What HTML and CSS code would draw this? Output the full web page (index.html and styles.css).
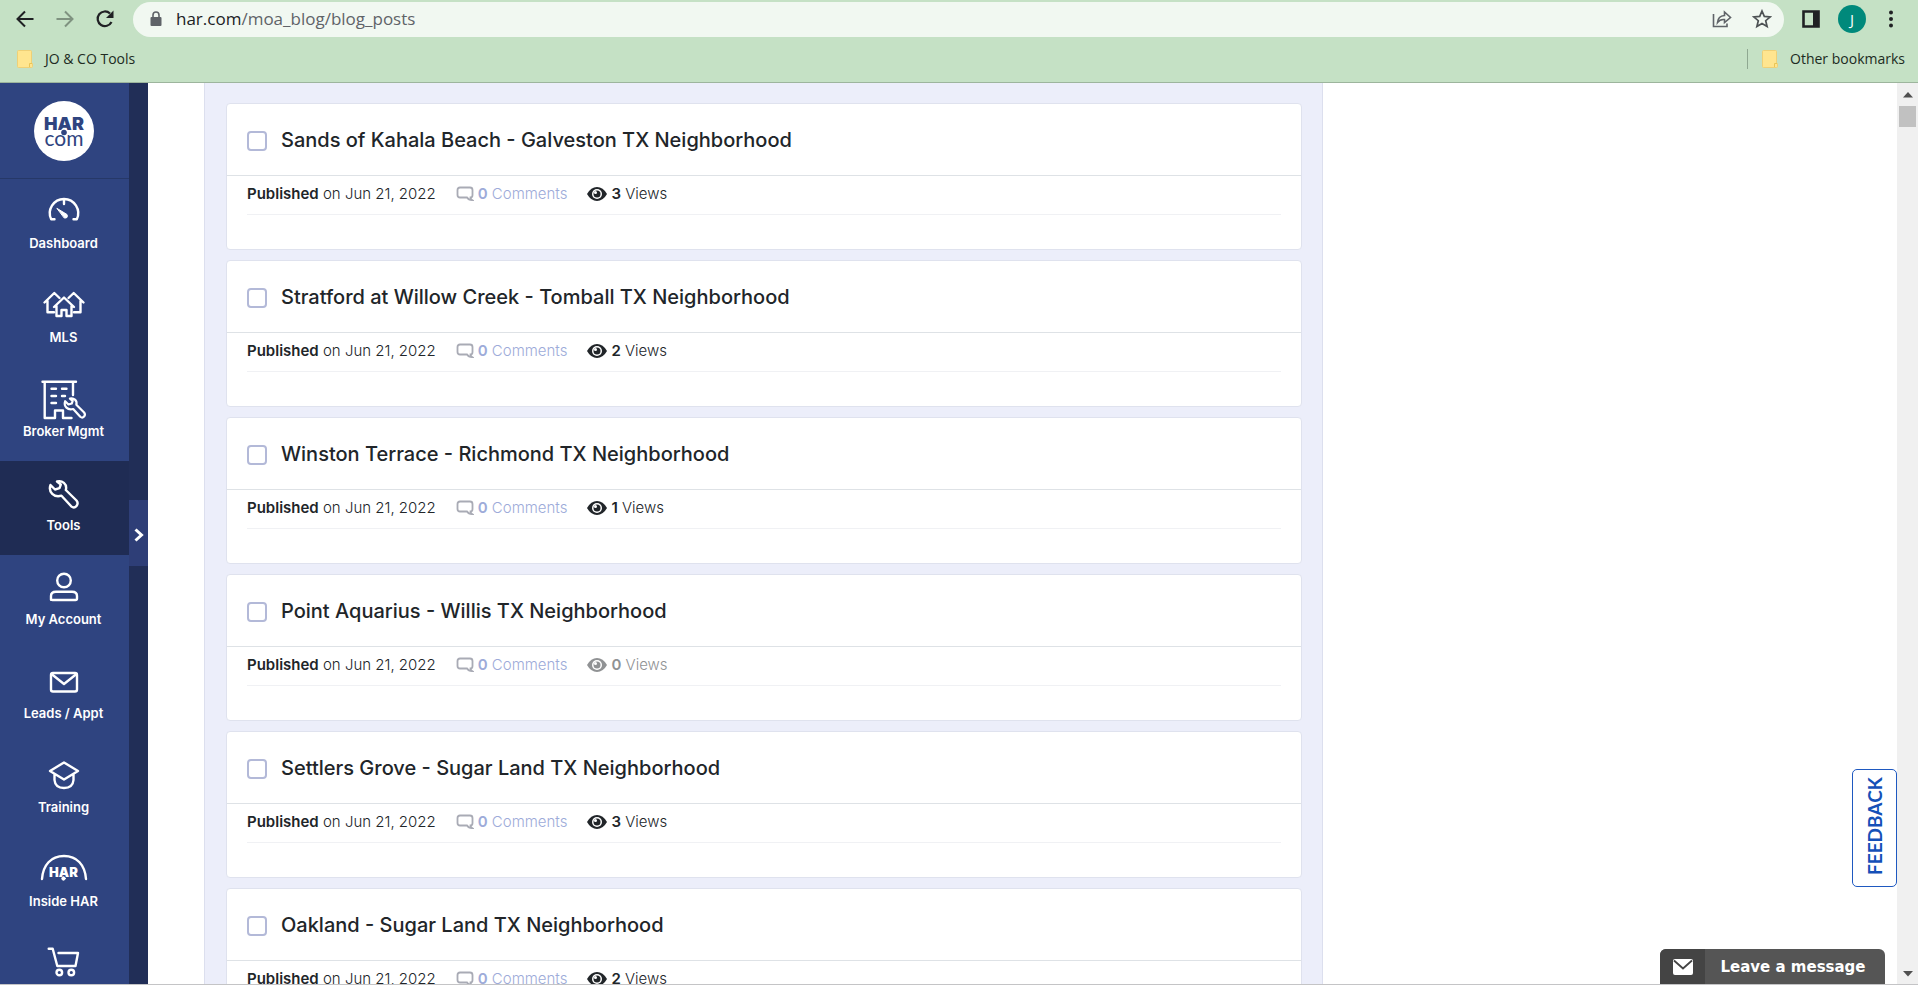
FILE: index.html
```
<!DOCTYPE html>
<html lang="en">
<head>
<meta charset="utf-8">
<meta name="viewport" content="width=device-width, initial-scale=1">
<title>Blog Posts</title>
<link rel="stylesheet" href="styles.css">
</head>
<body>
<svg class="defs" aria-hidden="true">
  <symbol id="wrench" viewBox="0 0 48 48"><path d="M17 12.500C22 11 27.500 15 25.800 21L36.500 31.500C39.500 35.500 35 40.500 31.200 37.300L21.500 26.700C14 29 8 23 10.500 16L15 20.500L19.500 19.200L20.800 15.500Z"/></symbol>
  <symbol id="comment" viewBox="0 0 18 16"><path d="M4 1.500H14Q16.500 1.500 16.500 4V9Q16.500 11.500 14.500 11.500Q14.500 13 16 14Q12.500 14 11 11.500H4Q1.500 11.500 1.500 9V4Q1.500 1.500 4 1.500Z" fill="none" stroke="currentColor" stroke-width="1.800"/></symbol>
  <symbol id="eye" viewBox="0 0 20 16"><path d="M0 8Q4 1 10 1T20 8Q16 15 10 15T0 8Z" fill="currentColor"/><circle cx="10" cy="8" r="5" fill="#fff"/><circle cx="10" cy="8" r="3.500" fill="currentColor"/><circle cx="8.500" cy="6.500" r="1.500" fill="#fff"/></symbol>
  <symbol id="folder" viewBox="0 0 16 18"><path d="M1.500.5H13.500Q14.500.5 14.500 1.500V13.500H15.500V16.500Q15.500 17.500 14.500 17.500H1.500Q.5 17.500.5 16.500V1.500Q.5.500 1.500.5Z" fill="#ffe58f" stroke="#efd076"/><path d="M12.500 17V13.500H15" fill="none" stroke="#e9c556"/></symbol>
</svg>

<header class="browser">
  <div class="toolbar">
    <button class="tool" aria-label="Back"><svg width="20" height="20" viewBox="0 0 20 20"><path d="M18.500 10H3M10 2.500L2.500 10L10 17.500" fill="none" stroke="#202124" stroke-width="2"/></svg></button>
    <button class="tool tool-dim" aria-label="Forward"><svg width="20" height="20" viewBox="0 0 20 20"><path d="M1.500 10H17M10 2.500L17.500 10L10 17.500" fill="none" stroke="#7f9280" stroke-width="2"/></svg></button>
    <button class="tool reload" aria-label="Reload"><svg width="20" height="20" viewBox="0 0 20 20"><path d="M16.500 13A7.300 7.300 0 1 1 15 4.500" fill="none" stroke="#202124" stroke-width="2.200"/><path d="M18.500 1.500V9H11Z" fill="#202124"/></svg></button>
    <div class="omnibox">
      <svg width="12" height="16" viewBox="0 0 12 16"><rect x=".5" y="6" width="11" height="9" rx="1" fill="#5f6368"/><path d="M3 7V4a3 3 0 0 1 6 0V7" fill="none" stroke="#5f6368" stroke-width="1.600"/></svg>
      <a class="url" href="#"><span class="host">har.com</span>/moa_blog/blog_posts</a>
      <button class="tool" aria-label="Share"><svg width="20" height="18" viewBox="0 0 20 18"><path d="M1.500 4V16.500H15V13.500M5.500 12.500Q6 6 12.500 5.500V2L18.500 7.500L12.500 12.500V9.500Q8 9 5.500 12.500Z" fill="none" stroke="#5f6368" stroke-width="1.600"/></svg></button>
      <button class="tool" aria-label="Bookmark this page"><svg width="20" height="20" viewBox="0 0 20 20"><path d="M10 2L12.300 7.400L18.200 7.900L13.700 11.700L15.100 17.500L10 14.400L4.900 17.500L6.300 11.700L1.800 7.900L7.700 7.400Z" fill="none" stroke="#4d5254" stroke-width="1.700"/></svg></button>
    </div>
    <button class="tool" aria-label="Side panel"><svg width="18" height="18" viewBox="0 0 18 18"><path d="M1.500 1.500H16.500V16.500H1.500Z" fill="none" stroke="#202124" stroke-width="2.600"/><rect x="11" y="1" width="6" height="16" fill="#202124"/></svg></button>
    <button class="avatar">J</button>
    <button class="tool" aria-label="Menu"><svg width="6" height="18" viewBox="0 0 6 18"><g fill="#202124"><circle cx="3" cy="2.500" r="2"/><circle cx="3" cy="9" r="2"/><circle cx="3" cy="15.500" r="2"/></g></svg></button>
  </div>
  <nav class="bookmarks" aria-label="Bookmarks">
    <a href="#"><svg width="16" height="18"><use href="#folder"/></svg>JO &amp; CO Tools</a>
    <a class="other" href="#"><svg width="16" height="18"><use href="#folder"/></svg>Other bookmarks</a>
  </nav>
</header>

<div class="page">
  <nav class="sidebar" aria-label="Main">
    <a class="logo" href="#"><svg width="60" height="60" viewBox="0 0 60 60"><circle cx="30" cy="30" r="30" fill="#fff"/><text class="logo-har" x="30" y="29" text-anchor="middle">HAR</text><circle cx="30" cy="31.500" r="3.800" fill="#fff"/><circle cx="30" cy="31.500" r="2.800" fill="#2f4480"/><text class="logo-com" x="30" y="45" text-anchor="middle">com</text></svg></a>
    <a class="item" href="#"><svg class="icon" viewBox="0 0 48 48"><path d="M14.500 32.300H11.200A14.200 14.200 0 1 1 36.800 32.300H33.500M24 12.500V17"/><path class="solid" d="M17.200 21.500L27 27.500Q28.500 31.500 24.500 31Z"/></svg>Dashboard</a>
    <a class="item" href="#"><svg class="icon" viewBox="0 0 48 48"><path d="M14 26L24 16.500L34 26M16.500 24.500V35H21.500V29H26.500V35H31.500V24.500M4.500 21.500L14.300 12L19.500 17M7.500 19.500V31.200H14M43.500 21.500L33.700 12L28.500 17M40.500 19.500V31.200H34"/></svg>MLS</a>
    <a class="item" href="#"><svg class="icon" viewBox="0 0 48 48"><path d="M2.500 6.700H36M4.700 6.700V43H15V35.500H23V43H31.500M33 6.700V20M11.500 13.700H16M22 13.700H26.500M11.500 21H16M22 21H25M11.500 28H16"/><g class="mini" transform="translate(17.500 14.500) scale(.73)"><path d="M17 12.500C22 11 27.500 15 25.800 21L36.500 31.500C39.500 35.500 35 40.500 31.200 37.300L21.500 26.700C14 29 8 23 10.500 16L15 20.500L19.500 19.200L20.800 15.500Z"/></g></svg>Broker Mgmt</a>
    <a class="item active" href="#"><svg class="icon"><use href="#wrench"/></svg>Tools</a>
    <a class="item" href="#"><svg class="icon" viewBox="0 0 48 48"><circle cx="24" cy="17.500" r="6.800"/><path d="M11 36.700V33Q11 28.700 16 28.700H32Q37 28.700 37 33V35.500Q37 37 35.500 37H12.500Q11 37 11 35.500"/></svg>My Account</a>
    <a class="item" href="#"><svg class="icon" viewBox="0 0 48 48"><rect x="11" y="16" width="26" height="18.500" rx="2"/><path d="M11.500 17L24 27L36.500 17"/></svg>Leads / Appt</a>
    <a class="item" href="#"><svg class="icon" viewBox="0 0 48 48"><path d="M10 20L24 11.500L38 20L24 28.500ZM14.500 23.500V29C15 35 19 37 24 37S33 35 33.500 29V23.500"/></svg>Training</a>
    <a class="item" href="#"><svg class="icon" viewBox="0 0 48 48"><path d="M2 34C3 20 11 11 24 11S45 20 46 34"/><text class="icon-har" x="23.500" y="32" text-anchor="middle">HAR</text><circle class="dot" cx="23.500" cy="33.500" r="1.700"/></svg>Inside HAR</a>
    <a class="item" href="#" aria-label="Store"><svg class="icon" viewBox="0 0 48 48"><path d="M8.700 9.800H12.700L17.300 27H35.500L38 14H18.500"/><circle cx="19.300" cy="33.500" r="2.800"/><circle cx="31.300" cy="33.500" r="2.800"/></svg></a>
  </nav>
  <div class="rail"><button class="expand" aria-label="Expand menu"><svg width="12" height="16" viewBox="0 0 12 16"><path d="M2.500 2.500L8.500 8L2.500 13.500" fill="none" stroke="#fff" stroke-width="3"/></svg></button></div>

  <main class="content">
    <section class="panel">
      <article class="card">
        <header><input type="checkbox" id="p1"><label for="p1">Sands of Kahala Beach - Galveston TX Neighborhood</label></header>
        <div class="meta"><span><b>Published</b> on Jun 21, 2022</span><a href="#"><svg width="18" height="16"><use href="#comment"/></svg><span><b>0</b> Comments</span></a><span class="views"><svg width="20" height="16"><use href="#eye"/></svg><span><b>3</b> Views</span></span></div>
      </article>
      <article class="card">
        <header><input type="checkbox" id="p2"><label for="p2">Stratford at Willow Creek - Tomball TX Neighborhood</label></header>
        <div class="meta"><span><b>Published</b> on Jun 21, 2022</span><a href="#"><svg width="18" height="16"><use href="#comment"/></svg><span><b>0</b> Comments</span></a><span class="views"><svg width="20" height="16"><use href="#eye"/></svg><span><b>2</b> Views</span></span></div>
      </article>
      <article class="card">
        <header><input type="checkbox" id="p3"><label for="p3">Winston Terrace - Richmond TX Neighborhood</label></header>
        <div class="meta"><span><b>Published</b> on Jun 21, 2022</span><a href="#"><svg width="18" height="16"><use href="#comment"/></svg><span><b>0</b> Comments</span></a><span class="views"><svg width="20" height="16"><use href="#eye"/></svg><span><b>1</b> Views</span></span></div>
      </article>
      <article class="card">
        <header><input type="checkbox" id="p4"><label for="p4">Point Aquarius - Willis TX Neighborhood</label></header>
        <div class="meta"><span><b>Published</b> on Jun 21, 2022</span><a href="#"><svg width="18" height="16"><use href="#comment"/></svg><span><b>0</b> Comments</span></a><span class="views none"><svg width="20" height="16"><use href="#eye"/></svg><span><b>0</b> Views</span></span></div>
      </article>
      <article class="card">
        <header><input type="checkbox" id="p5"><label for="p5">Settlers Grove - Sugar Land TX Neighborhood</label></header>
        <div class="meta"><span><b>Published</b> on Jun 21, 2022</span><a href="#"><svg width="18" height="16"><use href="#comment"/></svg><span><b>0</b> Comments</span></a><span class="views"><svg width="20" height="16"><use href="#eye"/></svg><span><b>3</b> Views</span></span></div>
      </article>
      <article class="card">
        <header><input type="checkbox" id="p6"><label for="p6">Oakland - Sugar Land TX Neighborhood</label></header>
        <div class="meta"><span><b>Published</b> on Jun 21, 2022</span><a href="#"><svg width="18" height="16"><use href="#comment"/></svg><span><b>0</b> Comments</span></a><span class="views"><svg width="20" height="16"><use href="#eye"/></svg><span><b>2</b> Views</span></span></div>
      </article>
    </section>
  </main>

  <div class="scrollbar" aria-hidden="true">
    <svg width="10" height="6" viewBox="0 0 10 6"><path d="M0 5.500L5 0L10 5.500Z" fill="#505050"/></svg>
    <div class="thumb"></div>
    <svg width="10" height="6" viewBox="0 0 10 6"><path d="M0 0L5 5.500L10 0Z" fill="#505050"/></svg>
  </div>

  <button class="feedback">FEEDBACK</button>
  <button class="message"><span class="message-icon"><svg width="20" height="16" viewBox="0 0 20 16"><rect width="20" height="16" rx="2" fill="#fff"/><path d="M1 1.500L10 9.500L19 1.500" fill="none" stroke="#444" stroke-width="1.800"/></svg></span><span class="message-text">Leave a message</span></button>
</div>
</body>
</html>
```
FILE: styles.css
```
* { box-sizing: border-box; }

body {
  margin: 0;
  height: 100vh;
  display: flex;
  flex-direction: column;
  overflow: hidden;
  background: #fff;
  color: #212529;
  font-family: Inter, "Liberation Sans", sans-serif;
  border-bottom: 1px solid #c4c4c6;
}

a { color: inherit; text-decoration: none; }
button { border: 0; padding: 0; background: none; font: inherit; color: inherit; cursor: pointer; }
svg { display: block; flex: none; }
.defs { position: absolute; width: 0; height: 0; }

/* Browser bar */
.browser {
  flex: none;
  background: #c5e1c5;
  border-bottom: 1px solid #9db59d;
  font-family: "Open Sans", "Noto Sans", sans-serif;
  color: #202b22;
}
.toolbar { display: flex; align-items: center; height: 38px; padding: 0 24px 0 15px; }
.toolbar > .tool { margin-right: 20px; }
.toolbar > .reload { margin-right: 18px; }
.toolbar > .tool:last-child { margin-right: 0; }
.omnibox {
  flex: 1;
  display: flex;
  align-items: center;
  height: 35px;
  margin-right: 18px;
  padding: 0 12px 0 17px;
  border-radius: 18px;
  background: #f1f8f1;
}
.omnibox .tool { margin-left: 20px; }
.url { flex: 1; margin-left: 14px; font-size: 17px; line-height: 24px; color: #5f6368; }
.host { color: #202124; }
.toolbar > .avatar {
  width: 28px;
  height: 28px;
  margin: 0 22px 0 -2px;
  border-radius: 50%;
  background: #00897b;
  color: #fff;
  font-size: 15px;
  line-height: 28px;
}
.bookmarks { display: flex; justify-content: space-between; align-items: center; height: 44px; padding: 0 13px 2px 17px; font-size: 14px; line-height: 20px; }
.bookmarks a { display: flex; align-items: center; gap: 12px; }
.bookmarks .other { padding-left: 14px; border-left: 1px solid #8fa891; }

/* Page */
.page { flex: 1; min-height: 0; display: flex; position: relative; overflow: hidden; }
.sidebar { flex: none; width: 129px; background: #2f4480; overflow: hidden; }
.logo { display: flex; justify-content: center; padding: 18px 2px 17px 0; border-bottom: 1px solid #263868; }
.logo-har { font: 900 18px Inter, sans-serif; fill: #2f4480; }
.logo-com { font: 400 21px Lato, sans-serif; fill: #2f4480; }
.item {
  display: flex;
  flex-direction: column;
  align-items: center;
  height: 94px;
  padding: 8px 2px 0 0;
  color: #fff;
  font-size: 13px;
  font-weight: 600;
  line-height: 16px;
}
.item.active { background: #1f2c54; }
.icon { width: 48px; height: 48px; fill: none; stroke: #fff; stroke-width: 2.4; stroke-linejoin: round; stroke-linecap: round; }
.icon .solid, .icon .dot { fill: #fff; stroke-width: 1; }
.icon .mini { stroke-width: 3; }
.icon-har { font: 900 13px Inter, sans-serif; fill: #fff; stroke: none; }
.rail { flex: none; display: flex; flex-direction: column; justify-content: center; width: 19px; padding-bottom: 2px; background: #212e57; }
.expand { display: flex; align-items: center; justify-content: center; height: 66px; padding-top: 4px; background: #2e3e77; }

.content { flex: 1; min-width: 0; padding-left: 56px; overflow: hidden; }
.panel {
  display: flex;
  flex-direction: column;
  gap: 10px;
  max-width: 1119px;
  min-height: 100%;
  padding: 20px 20px 20px 21px;
  background: #eceefa;
  border: solid #dcdfee;
  border-width: 0 1px;
}
.card { height: 147px; background: #fff; border: 1px solid #dfe2ee; border-radius: 4px; }
.card header { display: flex; align-items: center; gap: 14px; height: 72px; padding: 0 20px; border-bottom: 1px solid #dee2e6; }
.card label { font-size: 20px; font-weight: 500; line-height: 24px; }
.card input {
  appearance: none;
  flex: none;
  width: 20px;
  height: 20px;
  margin: 2px 0 0;
  border: 2px solid #b3b9d8;
  border-radius: 4px;
  background: #fff;
}
.meta {
  display: flex;
  align-items: center;
  gap: 20px;
  height: 39px;
  margin: 0 20px;
  padding-bottom: 2px;
  border-bottom: 1px solid #f0f1f4;
  font-size: 15px;
  font-weight: 300;
  line-height: 20px;
}
.meta b { font-weight: 600; }
.meta a, .views { display: flex; align-items: center; gap: 4px; }
.meta a { color: #9dabd9; }
.meta a svg { color: #a9abb5; }
.views.none { color: #909294; }

.scrollbar { flex: none; display: flex; flex-direction: column; align-items: center; width: 21px; padding: 9px 0 7px; background: #f0f0f0; }
.thumb { width: 17px; height: 21px; margin: 8px 0 auto; background: #c1c1c1; }

/* Floating widgets */
.feedback {
  position: absolute;
  right: 21px;
  bottom: 97px;
  height: 118px;
  width: 45px;
  padding-top: 4px;
  border: 1px solid #1f59c0;
  border-radius: 5px;
  background: #fff;
  color: #1450b8;
  font: 700 19px/24px Lato, sans-serif;
  writing-mode: vertical-rl;
  rotate: 180deg;
}
.message {
  position: absolute;
  right: 33px;
  bottom: 0;
  display: flex;
  height: 35px;
  width: 225px;
  border-radius: 6px 6px 0 0;
  background: #555;
  color: #fff;
  font: 700 15px/36px "DejaVu Sans", sans-serif;
  overflow: hidden;
}
.message-icon { display: flex; align-items: center; justify-content: center; width: 45px; height: 35px; background: #444; }
.message-text { flex: 1; padding-right: 4px; text-align: center; }
```
